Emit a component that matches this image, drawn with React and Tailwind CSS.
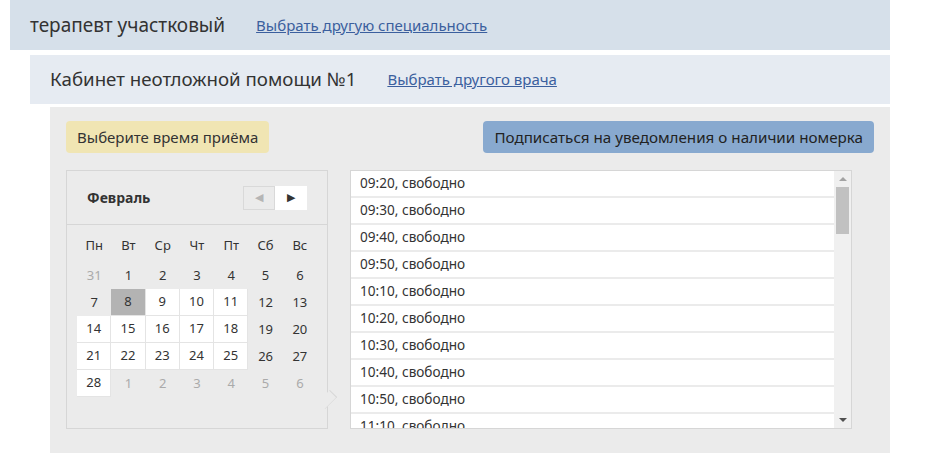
const WEEK = ["Пн", "Вт", "Ср", "Чт", "Пт", "Сб", "Вс"];

// февраль: o — чужой месяц, w — рабочий день с приёмом, s — выбранный
const DAYS = [
  [31, "o"], [1, ""], [2, ""], [3, ""], [4, ""], [5, ""], [6, ""],
  [7, ""], [8, "s"], [9, "w"], [10, "w"], [11, "w"], [12, ""], [13, ""],
  [14, "w"], [15, "w"], [16, "w"], [17, "w"], [18, "w"], [19, ""], [20, ""],
  [21, "w"], [22, "w"], [23, "w"], [24, "w"], [25, "w"], [26, ""], [27, ""],
  [28, "w"], [1, "o"], [2, "o"], [3, "o"], [4, "o"], [5, "o"], [6, "o"],
];

const SLOTS = [
  "09:20", "09:30", "09:40", "09:50", "10:10",
  "10:20", "10:30", "10:40", "10:50", "11:10",
];

function Calendar() {
  return (
    <div className="relative w-[262px] h-[259px] shrink-0 border border-[#d6d6d6] bg-[#ebebeb]">
      <div className="flex items-center justify-between h-[54px] pl-5 pr-5 border-b border-[#d6d6d6]">
        <span className="text-[14px] font-bold text-[#333]">Февраль</span>
        <div className="flex">
          <button className="w-[32px] h-[24px] flex items-center justify-center border border-[#d9d9d9] text-[#b5b5b5] text-[11px]">
            ◀
          </button>
          <button className="w-[32px] h-[24px] flex items-center justify-center bg-white text-[#333] text-[11px]">
            ▶
          </button>
        </div>
      </div>
      <div className="px-[10px] pt-[5px]">
        <div className="grid grid-cols-7 h-[32px] items-center text-center text-[13px] text-[#333]">
          {WEEK.map(d => (
            <span key={d}>{d}</span>
          ))}
        </div>
        <div className="grid grid-cols-7">
          {DAYS.map(([n, t], i) => (
            <div
              key={i}
              className={
                "h-[27px] flex items-center justify-center text-[13px] " +
                (t === "s"
                  ? "bg-[#b3b3b3] text-[#333] border-r border-b border-[#e4e4e4]"
                  : t === "w"
                  ? "bg-white text-[#333] border-r border-b border-[#e4e4e4]"
                  : t === "o"
                  ? "text-[#aaa]"
                  : "text-[#333]")
              }
            >
              {n}
            </div>
          ))}
        </div>
      </div>
      {/* уголок-указатель на список времени */}
      <div className="absolute right-[-9px] top-[220px] w-[17px] h-[17px] rotate-45 border-t border-r border-[#d6d6d6] bg-[#ebebeb] scale-x-[0.6]" />
    </div>
  );
}

function TimeList() {
  return (
    <div className="relative w-[502px] h-[259px] shrink-0 border border-[#d6d6d6] bg-[#ebebeb] overflow-hidden">
      <div className="pr-[17px]">
        {SLOTS.map(s => (
          <div
            key={s}
            className="h-[25px] mb-[2px] bg-white flex items-center pl-[9px] text-[13.6px] text-[#333]"
          >
            {s}, свободно
          </div>
        ))}
      </div>
      <div className="absolute right-0 top-0 bottom-0 w-[17px] bg-[#f0f0f0] flex flex-col items-center">
        <div className="h-[16px] flex items-center justify-center">
          <span className="block w-0 h-0 border-l-[4px] border-r-[4px] border-b-[4px] border-l-transparent border-r-transparent border-b-[#a3a3a3]" />
        </div>
        <div className="w-[13px] h-[47px] bg-[#c1c1c1]" />
        <div className="flex-1" />
        <div className="h-[16px] flex items-center justify-center">
          <span className="block w-0 h-0 border-l-[4px] border-r-[4px] border-t-[4px] border-l-transparent border-r-transparent border-t-[#505050]" />
        </div>
      </div>
    </div>
  );
}

export default function App() {
  return (
    <div
      className="w-[931px] h-[458px] bg-white overflow-hidden"
      style={{ fontFamily: '"Noto Sans", "Open Sans", sans-serif' }}
    >
      <div className="ml-[10px] w-[880px] h-[50px] bg-[#d6e0ea] flex items-center pl-5 gap-[31px]">
        <span className="text-[19px] text-[#333]">терапевт участковый</span>
        <a href="#" className="text-[15px] text-[#3b5f9e] underline">
          Выбрать другую специальность
        </a>
      </div>

      <div className="ml-[30px] mt-[5px] w-[860px] h-[49px] bg-[#e6ebf2] flex items-center pl-5 gap-[31px]">
        <span className="text-[18.7px] text-[#333]">Кабинет неотложной помощи №1</span>
        <a href="#" className="text-[15px] text-[#3b5f9e] underline">
          Выбрать другого врача
        </a>
      </div>

      <div className="ml-[50px] mt-[3px] w-[840px] h-[346px] bg-[#ebebeb] px-4 pt-[14px]">
        <div className="flex items-center justify-between">
          <div className="h-[32px] px-[11px] flex items-center rounded-[4px] bg-[#f0e5b3] text-[15px] text-[#333]">
            Выберите время приёма
          </div>
          <button className="h-[32px] px-[11px] flex items-center rounded-[4px] bg-[#88a9cf] text-[15.2px] text-[#222]">
            Подписаться на уведомления о наличии номерка
          </button>
        </div>
        <div className="flex gap-[22px] mt-[17px]">
          <Calendar />
          <TimeList />
        </div>
      </div>
    </div>
  );
}
